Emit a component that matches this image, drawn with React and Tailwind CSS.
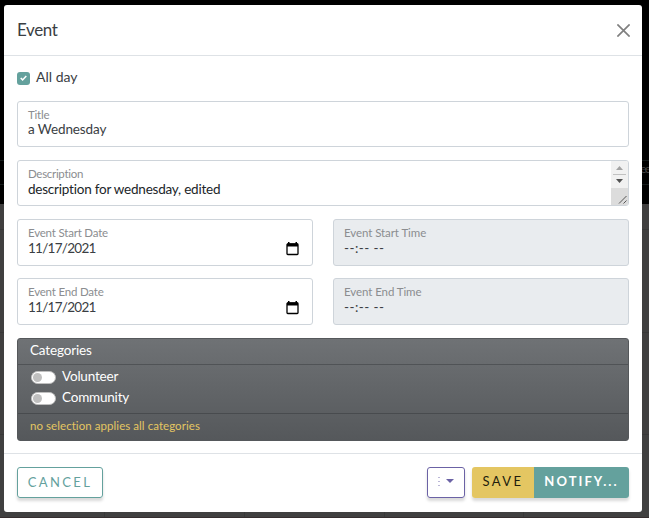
import React from "react";

function Field({ label, children, disabled = false, className = "" }) {
  return (
    <div
      className={`flex rounded-[3px] border border-[#ced4da] ${disabled ? "bg-[#e9ecef]" : "bg-white"} ${className}`}
    >
      <label className="flex min-w-0 flex-1 flex-col pl-[10px] pt-[5px]">
        <span
          className={`text-[11.5px] leading-[15px] text-[#8b8d90] ${disabled ? "tracking-[-0.08px]" : "tracking-[-0.2px]"}`}
        >
          {label}
        </span>
        {children}
      </label>
    </div>
  );
}

function CalendarIcon() {
  return (
    <svg width="13" height="14" viewBox="0 0 13 14" fill="none" className="mr-[13px]">
      <path d="M2 0h1.500v2H2zM9.500 0H11v2H9.500z" fill="#000" />
      <path d="M1 1.500h11v3H1z" fill="#000" />
      <rect x="1" y="2" width="11" height="10.500" rx="0.800" stroke="#000" strokeWidth="1.300" />
    </svg>
  );
}

function DateField({ label, value }) {
  return (
    <Field label={label} className="h-[47px] w-[296px]">
      <span className="mt-px flex h-[15px] items-center justify-between text-[13.5px] leading-[15px] tracking-[-0.72px]">
        {value}
        <CalendarIcon />
      </span>
    </Field>
  );
}

function TimeField({ label }) {
  return (
    <Field label={label} disabled className="h-[47px] w-[296px]">
      <span className="mt-px whitespace-pre text-[13.5px] leading-[15px] tracking-[0.45px]">--:-- --</span>
    </Field>
  );
}

function Switch({ label }) {
  return (
    <label className="flex h-[21px] items-center gap-[6px]">
      <span className="flex h-[13px] w-[25px] items-center rounded-full border border-[#bfbfbf] bg-white pl-[1px]">
        <span className="size-[9px] rounded-full bg-[#bfbfbf]" />
      </span>
      <span className="-mt-[3px] text-[13.5px] leading-[20px] tracking-[-0.2px]">{label}</span>
    </label>
  );
}

function Backdrop() {
  return (
    <div className="flex flex-col [grid-area:1/1]">
      <div className="h-[161px] border-b border-[#151b1b] bg-black" />
      <div className="flex h-[24px] justify-end border-b border-[#151b1b] bg-black">
        <span className="text-[12px] leading-[16px] tracking-[-2px] text-[#444]">ee</span>
      </div>
      <div className="h-[19px] bg-black" />
      <div className="h-[26px] border-b border-[#383838] bg-[#403f3f]" />
      <div className="h-[103px] border-b border-[#383838] bg-[#403f3f]" />
      <div className="h-[102px] border-b border-[#383838] bg-[#403f3f]" />
      <div className="flex flex-1 border-b border-[#352d2e] bg-[#404040]">
        <div className="w-[105px] border-r border-[#383838]" />
        <div className="w-[140px] border-r border-[#383838]" />
        <div className="w-[140px] border-r border-[#383838]" />
        <div className="w-[139px] border-r border-[#383838]" />
      </div>
    </div>
  );
}

export default function App() {
  return (
    <div className="grid h-[518px] w-[649px] overflow-hidden font-['Lato','Noto_Sans',sans-serif] text-[#3a3e43]">
      <Backdrop />
      <div className="z-10 ml-[4px] mt-[5px] flex h-[507px] w-[638px] flex-col rounded-[3px] bg-white [grid-area:1/1]">
        <header className="flex h-[51px] items-center justify-between border-b border-[#dee2e6] pl-[13px] pr-[12px]">
          <h1 className="text-[17px] leading-[24px] tracking-[-0.4px]">Event</h1>
          <svg width="13" height="13" viewBox="0 0 13 13" stroke="#808080" strokeWidth="1.700">
            <path d="M.4.4l12.200 12.200M12.600.4L.4 12.600" />
          </svg>
        </header>

        <main className="flex h-[397px] flex-col px-[13px]">
          <label className="mt-[12px] flex h-[20px] items-center gap-[6px]">
            <span className="flex size-[13px] items-center justify-center rounded-[3px] bg-[#64a19d]">
              <svg width="7" height="6" viewBox="0 0 7 6" fill="none" stroke="#fff" strokeWidth="1.500">
                <path d="M.7 3l1.900 1.900L6.300.9" />
              </svg>
            </span>
            <span className="-mt-[2px] text-[14px] leading-[20px]">All day</span>
          </label>

          <Field label="Title" className="mt-[13px] h-[46px]">
            <span className="text-[13.5px] leading-[15px] tracking-[-0.1px]">a Wednesday</span>
          </Field>

          <div className="mt-[13px] flex h-[46px] overflow-hidden rounded-[3px] border border-[#ced4da]">
            <label className="flex flex-1 flex-col pl-[10px] pt-[5px]">
              <span className="text-[11.5px] leading-[15px] tracking-[-0.3px] text-[#8b8d90]">Description</span>
              <span className="mt-px text-[13.5px] leading-[15px] tracking-[-0.22px] text-[#212529]">
                description for wednesday, edited
              </span>
            </label>
            <svg width="17" height="44" viewBox="0 0 17 44">
              <path d="M0 0h17v27H0z" fill="#f1f1f1" />
              <path d="M0 27h17v17H0z" fill="#dcdcdc" />
              <path d="M5 9l3.500-4L12 9z" fill="#a3a3a3" />
              <path d="M2 13h13v1H2z" fill="#c1c1c1" />
              <path d="M5 18h7l-3.500 4z" fill="#505050" />
              <path d="M8 42.500l7.500-7.500M12.500 42.500l3-3" stroke="#555" fill="none" />
            </svg>
          </div>

          <div className="mt-[13px] grid grid-cols-[296px_296px] gap-x-[20px] gap-y-[12px]">
            <DateField label="Event Start Date" value="11/17/2021" />
            <TimeField label="Event Start Time" />
            <DateField label="Event End Date" value="11/17/2021" />
            <TimeField label="Event End Time" />
          </div>

          <section className="mt-[13px] flex h-[103px] flex-col overflow-hidden rounded-[3px] border border-[#55585b] bg-gradient-to-b from-[#6f7275] to-[#55585b] text-white">
            <h2 className="h-[26px] border-b border-[#505356] pl-[12px] text-[13.5px] leading-[23px] tracking-[-0.15px]">
              Categories
            </h2>
            <div className="flex h-[49px] flex-col border-b border-[#484b4e] pl-[13px] pt-[2px]">
              <Switch label="Volunteer" />
              <Switch label="Community" />
            </div>
            <p className="pl-[12px] text-[11.5px] leading-[23px] tracking-[0.06px] text-[#e4c662]">
              no selection applies all categories
            </p>
          </section>
        </main>

        <footer className="flex h-[59px] items-start border-t border-[#dee2e6] px-[13px] pt-[13px] text-[13px] leading-[28px]">
          <button className="h-[31px] w-[86px] rounded-[3px] border border-[#64a19d] pb-[2px] tracking-[2.4px] text-[#64a19d] shadow-[0_3px_3px_rgba(0,0,0,0.15)]">
            CANCEL
          </button>
          <button className="ml-auto flex h-[31px] w-[38px] items-center justify-center gap-[6px] rounded-[3px] border border-[#6b62a5] text-[#6b62a5] shadow-[0_3px_3px_rgba(0,0,0,0.15)]">
            <svg width="2" height="10" viewBox="0 0 2 10" fill="#776eb0" className="-mt-px">
              <path d="M.5 0h1v1h-1zM.5 4h1v1h-1zM.5 8h1v1h-1z" />
            </svg>
            <svg width="8" height="4" viewBox="0 0 8 4" fill="#6b62a5" className="-mt-[4px]">
              <path d="M0 0h8L4 4z" />
            </svg>
          </button>
          <div className="ml-[7px] flex h-[31px] overflow-hidden rounded-[3px] shadow-[0_3px_3px_rgba(0,0,0,0.15)]">
            <button className="w-[62px] bg-[#e4c662] pb-[3px] tracking-[2.4px] text-[#211d0e]">SAVE</button>
            <button className="w-[95px] bg-[#64a19d] pb-[3px] font-bold tracking-[2.05px] text-white">NOTIFY...</button>
          </div>
        </footer>
      </div>
    </div>
  );
}
